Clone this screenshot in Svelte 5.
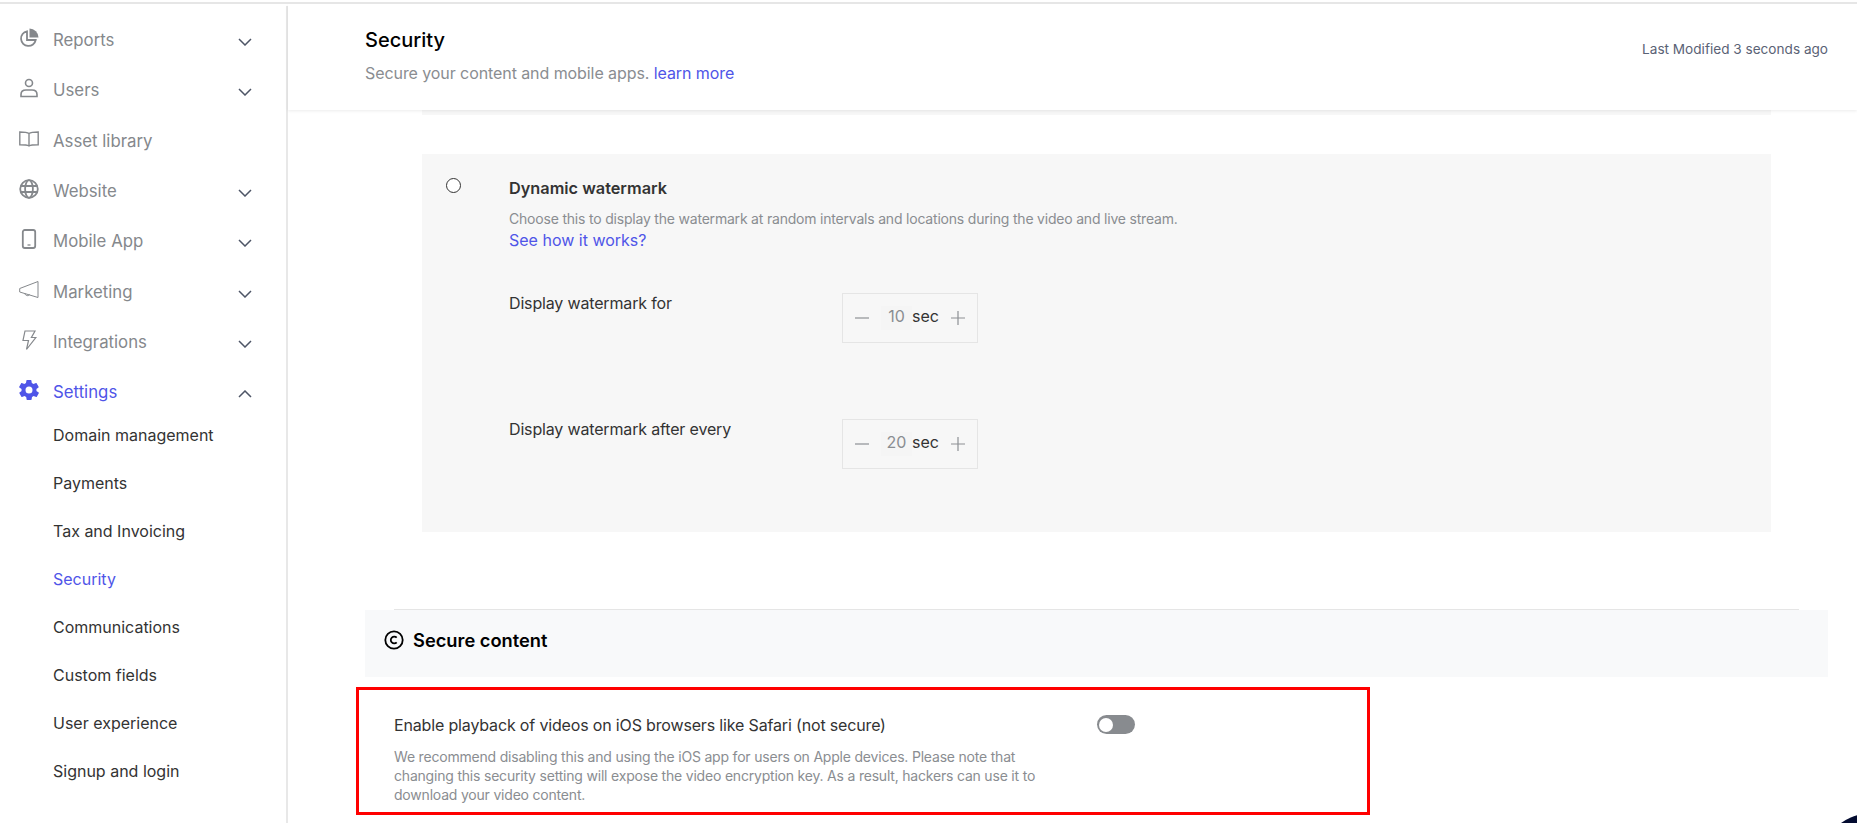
<script lang="ts">
  type NavItem = { label: string; icon: string; chevron?: boolean };

  const NAV: NavItem[] = [
    { label: "Reports", icon: "reports", chevron: true },
    { label: "Users", icon: "users", chevron: true },
    { label: "Asset library", icon: "book" },
    { label: "Website", icon: "globe", chevron: true },
    { label: "Mobile App", icon: "mobile", chevron: true },
    { label: "Marketing", icon: "megaphone", chevron: true },
    { label: "Integrations", icon: "bolt", chevron: true },
  ];
  const SUB_NAV = [
    "Domain management",
    "Payments",
    "Tax and Invoicing",
    "Security",
    "Communications",
    "Custom fields",
    "User experience",
    "Signup and login",
  ];
  const STEPPERS = [
    { label: "Display watermark for", value: 10 },
    { label: "Display watermark after every", value: 20 },
  ];
</script>

<div class="page">
  <aside class="sidebar">
    <nav class="nav">
      {#each NAV as item}
        <div class="nav-row">
          <svg class="nav-icon" viewBox="0 0 20 20" fill="none" stroke="#85888c" stroke-width="1.8">
            {#if item.icon === "reports"}
              <path d="M8 3.300a7.400 7.400 0 1 0 8.700 8.700H8z" />
              <path d="M10.500.5a9 9 0 0 1 9 9h-9z" fill="#85888c" stroke="none" />
            {:else if item.icon === "users"}
              <circle cx="10" cy="5" r="3.500" stroke-width="1.600" />
              <path d="M2 18.500v-2c0-3 2.400-4.500 5-4.500h6c2.600 0 5 1.500 5 4.500v2z" stroke-width="1.600" />
            {:else if item.icon === "book"}
              <path d="M10 4.500C8.500 3.400 6 3 .8 3v12.800c5.200 0 7.700.3 9.200 1.200 1.500-.9 4-1.200 9.200-1.200V3C14 3 11.500 3.400 10 4.500zM10 4.500V17" stroke-width="1.400" />
            {:else if item.icon === "globe"}
              <circle cx="10" cy="10" r="8.800" />
              <ellipse cx="10" cy="10" rx="3.900" ry="8.800" />
              <path d="M1.500 7h17M1.500 13h17" />
            {:else if item.icon === "mobile"}
              <rect x="3.800" y="1" width="12.400" height="18" rx="2" />
              <path d="M8.500 16h3" stroke-width="1.300" />
            {:else if item.icon === "megaphone"}
              <path d="M19 1.500v16L.7 12V8.500zM6 13.500c.2 2.500 4 2.800 4.500 1" stroke-width="1" />
            {:else if item.icon === "bolt"}
              <path d="M6 1h10l-3.600 6.500h4.400L7.500 19.500l2-9H4z" stroke-width="1.200" />
            {/if}
          </svg>
          <span class="nav-label">{item.label}</span>
          {#if item.chevron}
            <svg class="chevron" viewBox="0 0 14 8" fill="none" stroke="#4d5566" stroke-width="1.5">
              <path d="M1 1l6 6 6-6" />
            </svg>
          {/if}
        </div>
      {/each}

      <div class="nav-row nav-row--active">
        <svg class="nav-icon" viewBox="2 2 20 20" fill="#4f55e8">
          <path d="M19.400 13c.1-.3.1-.7.1-1s0-.7-.1-1l2.100-1.600c.2-.2.2-.4.1-.6l-2-3.500c-.1-.2-.4-.3-.6-.2l-2.500 1c-.5-.4-1.100-.7-1.700-1l-.4-2.600c0-.2-.2-.4-.5-.4h-4c-.2 0-.5.2-.5.4l-.4 2.600c-.6.3-1.200.6-1.700 1l-2.500-1c-.2-.1-.5 0-.6.2l-2 3.500c-.1.2-.1.5.1.6L4.600 11c0 .3-.1.700-.1 1s0 .7.1 1l-2.100 1.600c-.2.2-.2.4-.1.6l2 3.500c.1.2.4.3.6.2l2.500-1c.5.4 1.100.7 1.700 1l.4 2.600c0 .2.2.4.5.4h4c.2 0 .5-.2.5-.4l.4-2.600c.6-.3 1.200-.6 1.700-1l2.500 1c.2.1.5 0 .6-.2l2-3.500c.1-.2.1-.5-.1-.6zM12 15.500a3.500 3.500 0 1 1 0-7 3.500 3.500 0 0 1 0 7z" />
        </svg>
        <span class="nav-label">Settings</span>
        <svg class="chevron" viewBox="0 0 14 8" fill="none" stroke="#4d5566" stroke-width="1.5">
          <path d="M1 7l6-6 6 6" />
        </svg>
      </div>

      <div class="sub-nav">
        {#each SUB_NAV as label}
          <div class="sub-item" class:active={label === "Security"}>{label}</div>
        {/each}
      </div>
    </nav>
  </aside>

  <main class="main">
    <header class="header">
      <div>
        <h1 class="title">Security</h1>
        <p class="subtitle">Secure your content and mobile apps. <span class="link">learn more</span></p>
      </div>
      <span class="modified">Last Modified 3 seconds ago</span>
    </header>

    <div class="content">
      <div class="strip"></div>

      <section class="panel">
        <span class="radio"></span>
        <div class="panel-body">
          <h2 class="panel-title">Dynamic watermark</h2>
          <p class="panel-desc">Choose this to display the watermark at random intervals and locations during the video and live stream.</p>
          <span class="link link--small">See how it works?</span>

          <div class="stepper-list">
            {#each STEPPERS as row}
              <div class="stepper-row">
                <span class="stepper-label">{row.label}</span>
                <div class="stepper">
                  <svg class="step-icon" viewBox="0 0 14 14" stroke="#8d9094" stroke-width="1.200"><path d="M0 7h14" /></svg>
                  <span class="step-value">{row.value}</span>
                  <span class="step-unit">sec</span>
                  <svg class="step-icon" viewBox="0 0 14 14" stroke="#8d9094" stroke-width="1.200"><path d="M0 7h14M7 0v14" /></svg>
                </div>
              </div>
            {/each}
          </div>
        </div>
      </section>

      <div class="rule-wrap"><div class="rule"></div></div>
      <section class="section-head">
        <svg class="copy-icon" viewBox="0 0 20 20" fill="none" stroke="#000" stroke-width="1.800">
          <circle cx="10" cy="10" r="8.700" />
          <path d="M12.700 7.700a3.400 3.400 0 1 0 0 4.600" />
        </svg>
        <h2 class="section-title">Secure content</h2>
      </section>

      <section class="callout">
        <div class="callout-text">
          <p class="callout-title">Enable playback of videos on iOS browsers like Safari (not secure)</p>
          <p class="callout-desc">We recommend disabling this and using the iOS app for users on Apple devices. Please note that changing this security setting will expose the video encryption key. As a result, hackers can use it to download your video content.</p>
        </div>
        <span class="toggle"><span class="knob"></span></span>
      </section>
    </div>
  </main>

  <div class="chat-bubble"></div>
</div>

<style>
  :global(body) {
    margin: 0;
    background: #fff;
    overflow: hidden;
  }

  .page {
    position: relative;
    display: grid;
    grid-template-columns: 288px 1fr;
    height: 819px;
    overflow: hidden;
    border-top: 2px solid #e6e6e6;
    margin-top: 2px;
    font-family: Inter, "Liberation Sans", sans-serif;
    color: #333;
  }

  .sidebar {
    border-right: 2px solid #e8e8e8;
    margin-top: 2px;
    box-sizing: border-box;
  }

  .nav {
    padding-top: 9px;
  }

  .nav-row {
    display: flex;
    align-items: center;
    height: 50.300px;
    padding-left: 19px;
    color: #85888c;
    font-size: 16.800px;
  }

  .nav-row--active {
    color: #4f55e8;
  }

  .nav-icon {
    width: 20px;
    height: 20px;
    flex: none;
    margin-top: -4px;
  }

  .nav-label {
    margin-left: 14px;
  }

  .chevron {
    width: 14px;
    height: 8px;
    margin-left: auto;
    margin-right: 34px;
    margin-top: 4px;
  }

  .sub-nav {
    margin-top: -6px;
  }

  .sub-item {
    display: flex;
    align-items: center;
    height: 48px;
    padding-left: 53px;
    font-size: 16px;
    color: #333;
  }

  .sub-item.active {
    color: #4f55e8;
  }

  .main {
    min-width: 0;
  }

  .header {
    display: flex;
    justify-content: space-between;
    height: 106px;
    box-sizing: border-box;
    padding: 23px 29px 0 77px;
    box-shadow: 0 1px 3px rgba(0, 0, 0, 0.08);
    position: relative;
  }

  .title {
    margin: 0;
    font-size: 20px;
    line-height: 26px;
    font-weight: 500;
    color: #000;
  }

  .subtitle {
    margin: 8px 0 0;
    font-size: 16px;
    line-height: 24px;
    letter-spacing: -0.08px;
    color: #8a8d91;
  }

  .link {
    color: #4f55e8;
  }

  .link--small {
    display: block;
    font-size: 16px;
    line-height: 22px;
  }

  .modified {
    margin-top: 14px;
    font-size: 13.600px;
    color: #5a6275;
  }

  .content {
    padding: 0 29px 0 77px;
  }

  .strip {
    margin: 0 57px;
    height: 5px;
    background: #f7f7f7;
  }

  .panel {
    display: flex;
    margin: 39px 57px 0;
    height: 378px;
    background: #f7f7f7;
    box-sizing: border-box;
    padding: 24px 0 0 24px;
  }

  .radio {
    width: 15px;
    height: 15px;
    box-sizing: border-box;
    border: 1px solid #333;
    border-radius: 50%;
    background: #fff;
    flex: none;
  }

  .panel-body {
    margin-left: 48px;
  }

  .panel-title {
    margin: 0;
    font-size: 16.300px;
    line-height: 20px;
    font-weight: 600;
    color: #333;
  }

  .panel-desc {
    margin: 11px 0 0;
    font-size: 14px;
    line-height: 20px;
    letter-spacing: -0.2px;
    color: #8a8d91;
  }

  .stepper-list {
    margin-top: 42px;
    display: flex;
    flex-direction: column;
    gap: 76px;
  }

  .stepper-row {
    display: grid;
    grid-template-columns: 333px 136px;
  }

  .stepper-label {
    font-size: 16px;
    letter-spacing: -0.16px;
    line-height: 20px;
    color: #333;
  }

  .stepper {
    display: flex;
    align-items: center;
    height: 50px;
    box-sizing: border-box;
    border: 1px solid #e5e5e5;
    padding-left: 12px;
  }

  .step-icon {
    width: 14px;
    height: 14px;
    flex: none;
  }

  .step-value {
    width: 31px;
    height: 24px;
    margin-left: 12px;
    background: #f5f5f5;
    text-align: center;
    font-size: 16px;
    line-height: 20px;
    color: #8a8d91;
  }

  .step-unit {
    width: 39px;
    font-size: 16px;
    color: #333;
    margin-top: -4px;
  }

  .rule-wrap {
    padding: 77px 29px 0;
  }

  .rule {
    height: 1px;
    background: #e5e5e5;
  }

  .section-head {
    display: flex;
    align-items: center;
    height: 67px;
    padding: 0 0 8px 19px;
    box-sizing: border-box;
    background: #f8f9fa;
  }

  .copy-icon {
    width: 20px;
    height: 20px;
    flex: none;
  }

  .section-title {
    margin: 0 0 0 9px;
    font-size: 18.300px;
    font-weight: 600;
    color: #000;
  }

  .callout {
    display: flex;
    align-items: flex-start;
    width: 1014px;
    height: 128px;
    box-sizing: border-box;
    margin: 10px 0 0 -9px;
    border: 3px solid #f00;
    padding: 25px 0 0 35px;
  }

  .callout-text {
    width: 645px;
  }

  .callout-title {
    margin: 0;
    font-size: 16px;
    letter-spacing: -0.16px;
    line-height: 20px;
    color: #333;
  }

  .callout-desc {
    margin: 12px 0 0;
    font-size: 14px;
    letter-spacing: -0.2px;
    line-height: 19px;
    color: #8a8d91;
  }

  .toggle {
    display: flex;
    align-items: center;
    width: 38px;
    height: 19px;
    padding-left: 2px;
    box-sizing: border-box;
    margin-left: 58px;
    background: #888b8f;
    border-radius: 10px;
  }

  .knob {
    width: 14px;
    height: 14px;
    border-radius: 50%;
    background: #fff;
  }

  .chat-bubble {
    position: absolute;
    left: 1823px;
    top: 810px;
    width: 90px;
    height: 90px;
    border-radius: 50%;
    background: #030b30;
  }
</style>
